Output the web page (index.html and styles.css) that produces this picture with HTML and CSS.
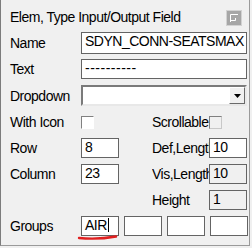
FILE: index.html
```html
<!DOCTYPE html>
<html lang="en">
<head>
  <meta charset="UTF-8" />
  <title>Element Attributes</title>
  <link rel="stylesheet" href="styles.css">
</head>
<body>
  <div class="panel">
    <div class="head">
      <span class="title">Elem, Type Input/Output Field</span>
      <span class="tool">
        <svg width="10" height="10" viewBox="0 0 10 10">
          <path d="M1.5 9 V1.5 H9" fill="none" stroke="#fff" stroke-width="1"/>
          <path d="M1.5 7.5 H6.5 V5" fill="none" stroke="#fff" stroke-width="1"/>
        </svg>
      </span>
    </div>

    <div class="row name-row">
      <span class="lbl">Name</span>
      <div class="field wide">SDYN_CONN-SEATSMAX</div>
    </div>
    <div class="row">
      <span class="lbl">Text</span>
      <div class="field wide dashes">----------</div>
    </div>
    <div class="row drop-row">
      <span class="lbl">Dropdown</span>
      <div class="combo">
        <span class="combo-btn">
          <svg width="7" height="4" viewBox="0 0 7 4"><path d="M0 0 H7 L3.5 4 Z" fill="#000"/></svg>
        </span>
      </div>
    </div>
    <div class="row">
      <span class="lbl">With Icon</span>
      <div class="slot"><span class="check"></span></div>
      <span class="lbl2">Scrollable</span>
      <span class="check off"></span>
    </div>
    <div class="row">
      <span class="lbl">Row</span>
      <div class="field short">8</div>
      <span class="lbl2">Def,Length</span>
      <div class="field short">10</div>
    </div>
    <div class="row">
      <span class="lbl">Column</span>
      <div class="field short">23</div>
      <span class="lbl2">Vis,Length</span>
      <div class="field short off">10</div>
    </div>
    <div class="row">
      <span class="lbl"></span>
      <div class="slot"></div>
      <span class="lbl2 plain">Height</span>
      <div class="field short off">1</div>
    </div>
    <div class="row groups">
      <span class="lbl">Groups</span>
      <div class="field short">AIR<span class="caret"></span></div>
      <div class="field short"></div>
      <div class="field short"></div>
      <div class="field short"></div>
    </div>

    <svg class="mark" width="42" height="8" viewBox="0 0 42 8">
      <path d="M2 5 C12 6 28 5.5 39 3.5" fill="none" stroke="#e02020" stroke-width="2.4" stroke-linecap="round"/>
    </svg>
  </div>
</body>
</html>
```

FILE: styles.css
```css
body {
  margin: 0;
  background: #f0f0f0;
  color: #000;
  font-family: "Liberation Sans", Arial, sans-serif;
  font-size: 14px;
  letter-spacing: -0.5px;
}

.panel {
  position: relative;
  width: 250px;
  height: 246px;
  box-sizing: border-box;
  border-left: 1px solid #7c7c7c;
  border-right: 1px solid #9a9a9a;
  border-bottom: 1px solid #9a9a9a;
  padding: 7px 0 0 9px;
  display: flex;
  flex-direction: column;
  gap: 6px;
}

.head {
  display: flex;
  align-items: center;
  height: 19px;
}

.title {
  flex: 1;
}

.tool {
  width: 16px;
  height: 16px;
  box-sizing: border-box;
  margin: 2px 7px 0 0;
  background: #a6a6a6;
  border: 1px solid #d2d2d2;
  display: flex;
  align-items: center;
  justify-content: center;
}

.row {
  display: flex;
  align-items: center;
  height: 20px;
}

.name-row,
.drop-row {
  height: 21px;
}

.lbl {
  width: 71px;
  flex: none;
}

.lbl2 {
  width: 57px;
  margin-left: 33px;
  overflow: hidden;
  white-space: nowrap;
  flex: none;
}

.lbl2.plain {
  padding-left: 0;
}

.slot {
  width: 38px;
  flex: none;
}

.field {
  height: 20px;
  box-sizing: border-box;
  border: 1px solid #646464;
  background: #fff;
  padding: 0 3px;
  line-height: 16px;
  white-space: nowrap;
  overflow: hidden;
  flex: none;
}

.name-row .field {
  height: 22px;
}

.field.wide {
  width: 166px;
}

.field.short {
  width: 38px;
}

.field.off {
  background: #f0f0f0;
}

.dashes {
  letter-spacing: 0.5px;
}

.combo {
  width: 166px;
  height: 21px;
  box-sizing: border-box;
  border: 2px solid;
  border-color: #7a7a7a #e8e8e8 #e8e8e8 #7a7a7a;
  background: #fff;
  display: flex;
  justify-content: flex-end;
}

.combo-btn {
  width: 16px;
  height: 17px;
  box-sizing: border-box;
  border: 1px solid;
  border-color: #fff #6a6a6a #6a6a6a #fff;
  background: #f0f0f0;
  display: flex;
  align-items: center;
  justify-content: center;
}

.check {
  display: block;
  width: 13px;
  height: 13px;
  box-sizing: border-box;
  border: 1px solid;
  border-color: #808080 #fff #fff #808080;
  background: #fff;
  flex: none;
}

.check.off {
  background: #f0f0f0;
  border-color: #808080 #c8c8c8 #c8c8c8 #808080;
}

.groups {
  gap: 5px;
}

.groups .lbl {
  width: 66px;
}

.caret {
  display: inline-block;
  width: 1px;
  height: 14px;
  background: #000;
  vertical-align: -2px;
  margin-left: 1px;
}

.mark {
  position: absolute;
  left: 76px;
  top: 233px;
}
```
